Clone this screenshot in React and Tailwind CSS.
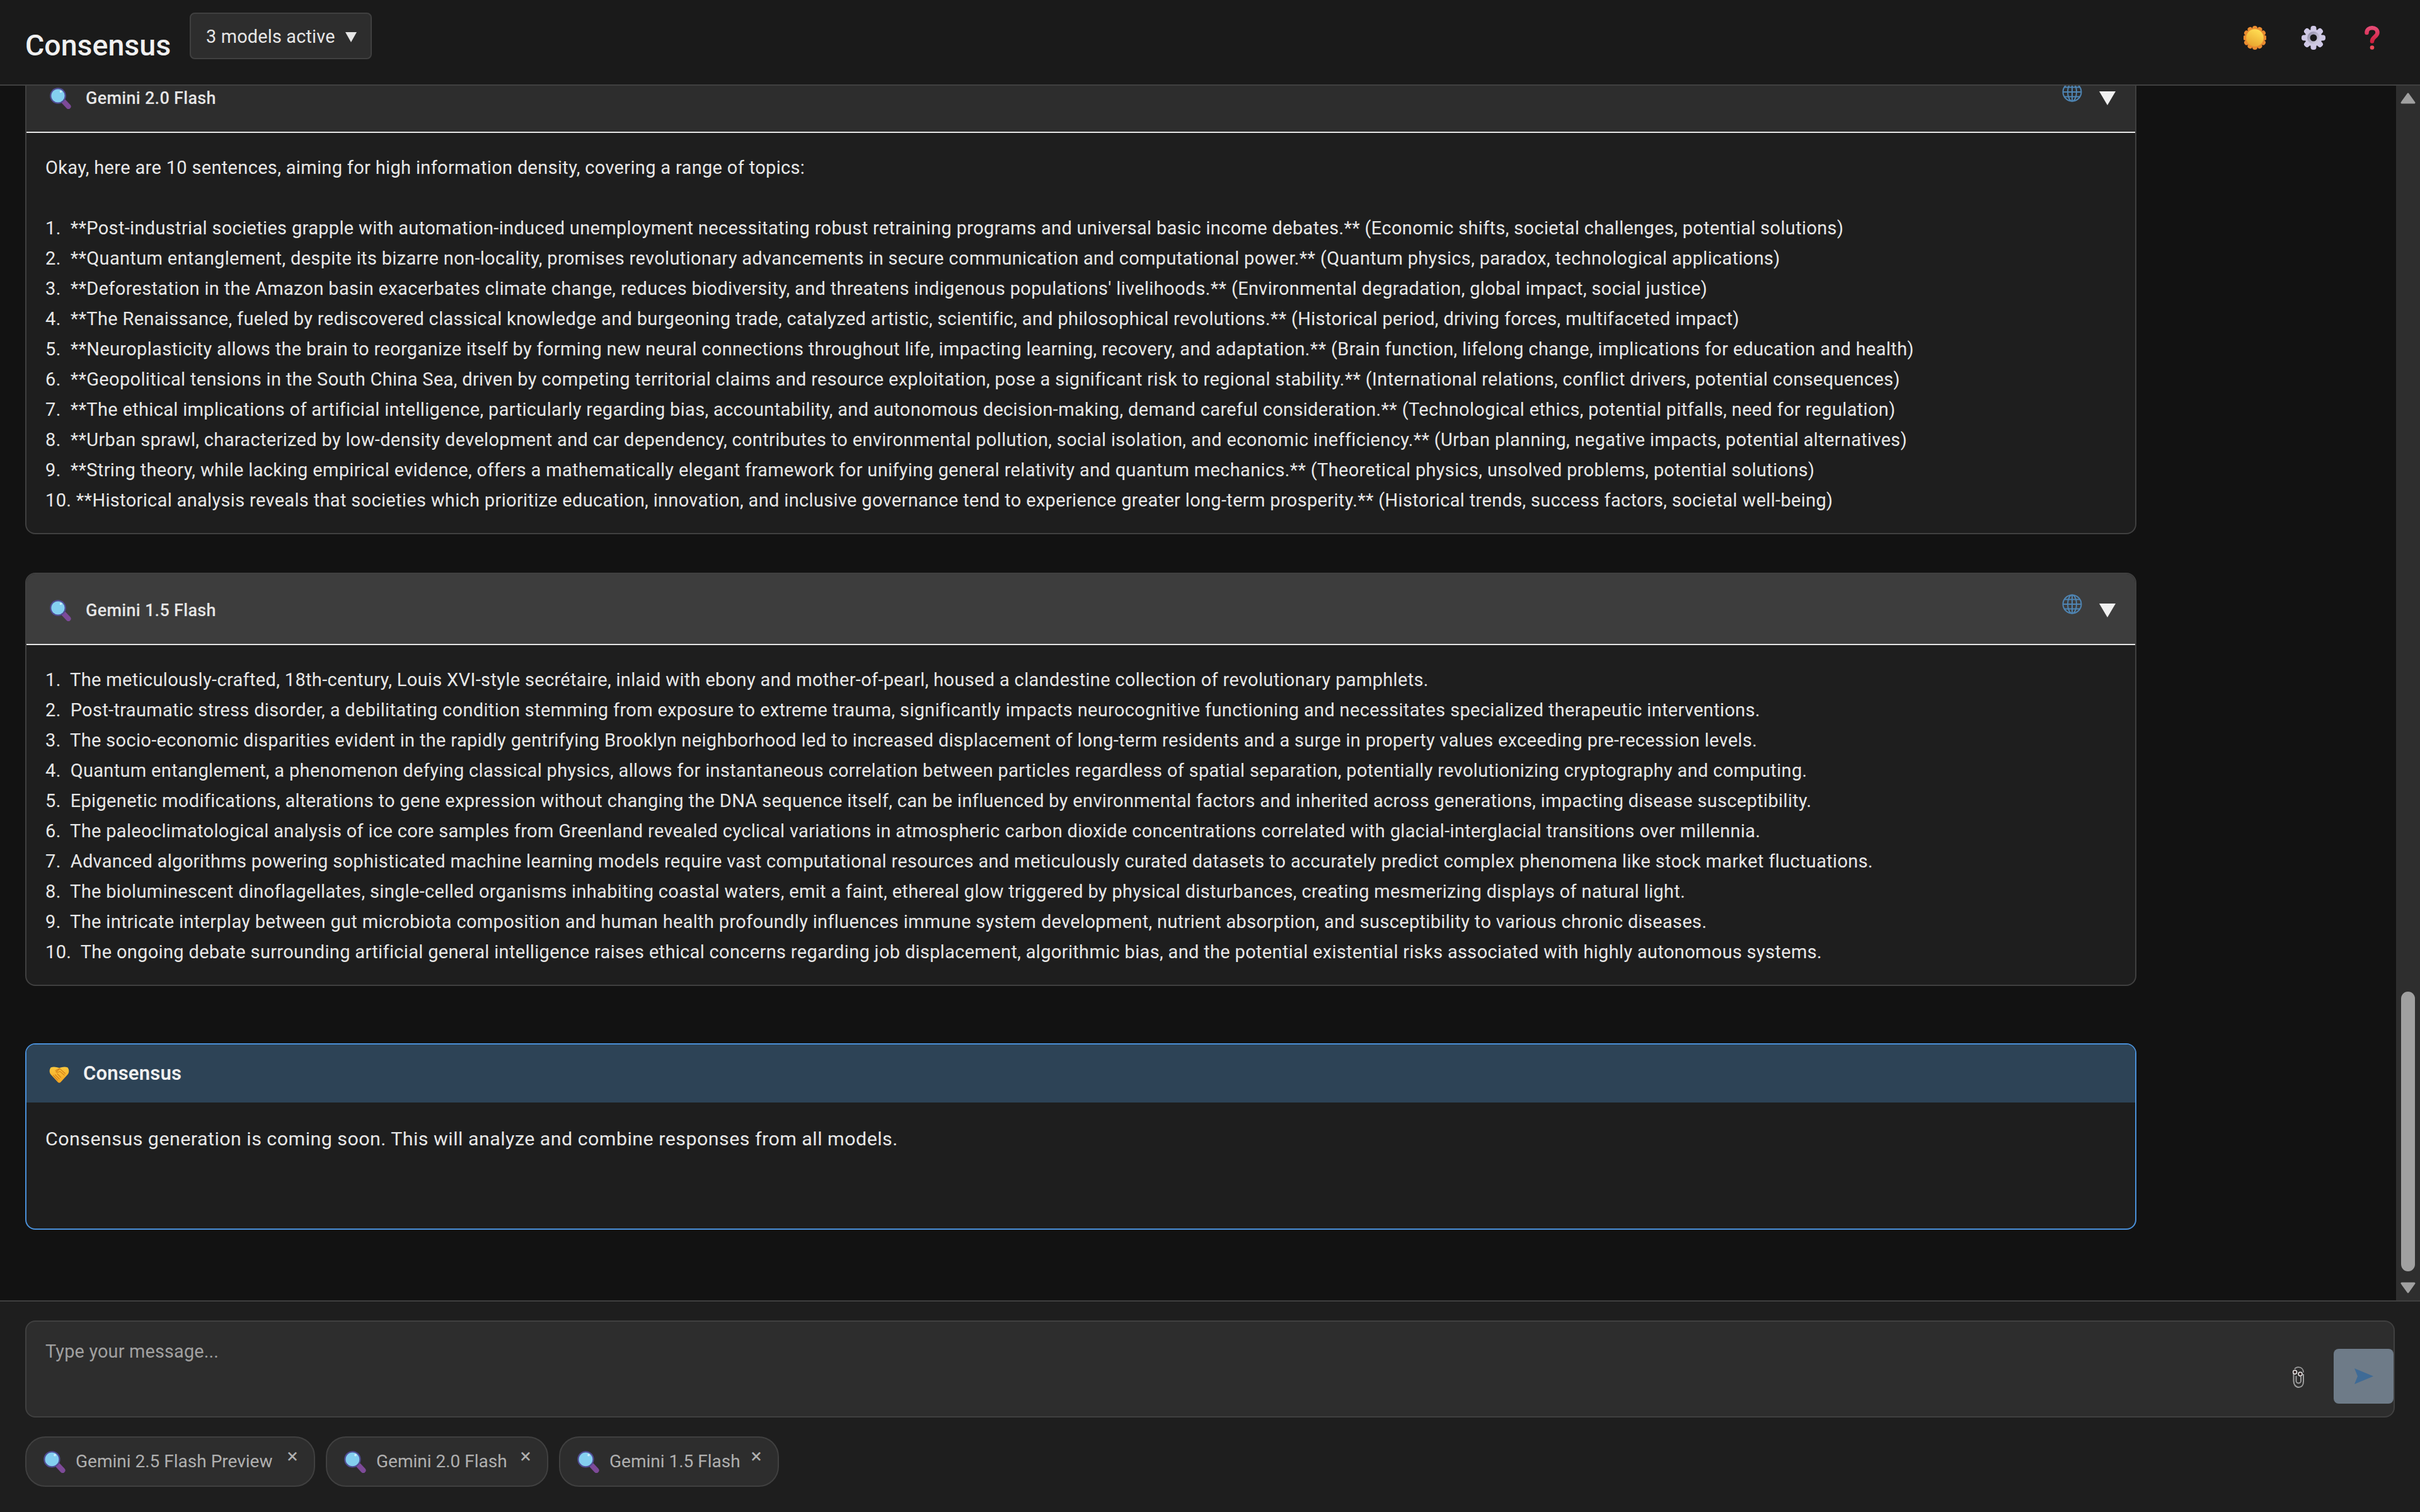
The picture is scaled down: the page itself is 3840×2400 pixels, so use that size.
import React from 'react';

const FIRST_RESPONSE = `Okay, here are 10 sentences, aiming for high information density, covering a range of topics:

1.  **Post-industrial societies grapple with automation-induced unemployment necessitating robust retraining programs and universal basic income debates.** (Economic shifts, societal challenges, potential solutions)
2.  **Quantum entanglement, despite its bizarre non-locality, promises revolutionary advancements in secure communication and computational power.** (Quantum physics, paradox, technological applications)
3.  **Deforestation in the Amazon basin exacerbates climate change, reduces biodiversity, and threatens indigenous populations' livelihoods.** (Environmental degradation, global impact, social justice)
4.  **The Renaissance, fueled by rediscovered classical knowledge and burgeoning trade, catalyzed artistic, scientific, and philosophical revolutions.** (Historical period, driving forces, multifaceted impact)
5.  **Neuroplasticity allows the brain to reorganize itself by forming new neural connections throughout life, impacting learning, recovery, and adaptation.** (Brain function, lifelong change, implications for education and health)
6.  **Geopolitical tensions in the South China Sea, driven by competing territorial claims and resource exploitation, pose a significant risk to regional stability.** (International relations, conflict drivers, potential consequences)
7.  **The ethical implications of artificial intelligence, particularly regarding bias, accountability, and autonomous decision-making, demand careful consideration.** (Technological ethics, potential pitfalls, need for regulation)
8.  **Urban sprawl, characterized by low-density development and car dependency, contributes to environmental pollution, social isolation, and economic inefficiency.** (Urban planning, negative impacts, potential alternatives)
9.  **String theory, while lacking empirical evidence, offers a mathematically elegant framework for unifying general relativity and quantum mechanics.** (Theoretical physics, unsolved problems, potential solutions)
10. **Historical analysis reveals that societies which prioritize education, innovation, and inclusive governance tend to experience greater long-term prosperity.** (Historical trends, success factors, societal well-being)`;

const SECOND_RESPONSE = `1.  The meticulously-crafted, 18th-century, Louis XVI-style secrétaire, inlaid with ebony and mother-of-pearl, housed a clandestine collection of revolutionary pamphlets.
2.  Post-traumatic stress disorder, a debilitating condition stemming from exposure to extreme trauma, significantly impacts neurocognitive functioning and necessitates specialized therapeutic interventions.
3.  The socio-economic disparities evident in the rapidly gentrifying Brooklyn neighborhood led to increased displacement of long-term residents and a surge in property values exceeding pre-recession levels.
4.  Quantum entanglement, a phenomenon defying classical physics, allows for instantaneous correlation between particles regardless of spatial separation, potentially revolutionizing cryptography and computing.
5.  Epigenetic modifications, alterations to gene expression without changing the DNA sequence itself, can be influenced by environmental factors and inherited across generations, impacting disease susceptibility.
6.  The paleoclimatological analysis of ice core samples from Greenland revealed cyclical variations in atmospheric carbon dioxide concentrations correlated with glacial-interglacial transitions over millennia.
7.  Advanced algorithms powering sophisticated machine learning models require vast computational resources and meticulously curated datasets to accurately predict complex phenomena like stock market fluctuations.
8.  The bioluminescent dinoflagellates, single-celled organisms inhabiting coastal waters, emit a faint, ethereal glow triggered by physical disturbances, creating mesmerizing displays of natural light.
9.  The intricate interplay between gut microbiota composition and human health profoundly influences immune system development, nutrient absorption, and susceptibility to various chronic diseases.
10.  The ongoing debate surrounding artificial general intelligence raises ethical concerns regarding job displacement, algorithmic bias, and the potential existential risks associated with highly autonomous systems.`;

const CHIPS = [
  { name: 'Gemini 2.5 Flash Preview', width: 'w-[460px]' },
  { name: 'Gemini 2.0 Flash', width: 'w-[353px]' },
  { name: 'Gemini 1.5 Flash', width: 'w-[349px]' },
];

function Magnifier({ className }) {
  return (
    <svg viewBox="0 0 34 34" className={className}>
      <path d="M22.500 22.500L29.500 30" stroke="#7d4a98" strokeWidth="8" strokeLinecap="round" />
      <circle cx="13" cy="13" r="12.800" fill="#504c94" />
      <circle cx="13" cy="13" r="10.600" fill="#84cff0" />
      <circle cx="17.500" cy="6.500" r="1.800" fill="#cfeffb" />
    </svg>
  );
}

function Globe({ className }) {
  return (
    <svg viewBox="0 0 32 32" className={className} fill="none" stroke="#4f85b3" strokeWidth="2">
      <circle cx="16" cy="16" r="14.500" />
      <ellipse cx="16" cy="16" rx="7" ry="14.500" />
      <path d="M16 1.500v29M1.500 16h29M3.500 8.500h25M3.500 23.500h25" />
    </svg>
  );
}

function Sun({ className }) {
  return (
    <svg viewBox="0 0 36 38" className={className}>
      <defs>
        <linearGradient id="sunFill" x1="0.75" y1="0.1" x2="0.3" y2="1">
          <stop offset="0" stopColor="#ffdc52" />
          <stop offset="1" stopColor="#e8a42e" />
        </linearGradient>
      </defs>
      {[0, 30, 60, 90, 120, 150, 180, 210, 240, 270, 300, 330].map((a) => (
        <circle key={a} cx="18" cy="4" r="4" fill="#ea8c30" transform={`rotate(${a} 18 19)`} />
      ))}
      <circle cx="18" cy="19" r="15" fill="#ea8c30" />
      <circle cx="18" cy="19" r="13.800" fill="url(#sunFill)" />
    </svg>
  );
}

function Gear({ className }) {
  return (
    <svg viewBox="0 0 38 38" className={className}>
      <defs>
        <linearGradient id="gearRing" x1="0" y1="0" x2="1" y2="1">
          <stop offset="0" stopColor="#8f8ba6" />
          <stop offset="1" stopColor="#dcd8ea" />
        </linearGradient>
      </defs>
      {[0, 45, 90, 135, 180, 225, 270, 315].map((a) => (
        <rect key={a} x="14.500" y="0" width="9" height="12" rx="4" fill="#cfc8e6" transform={`rotate(${a} 19 19)`} />
      ))}
      <circle cx="19" cy="19" r="13.500" fill="#cfc9e4" />
      <circle cx="19" cy="19" r="10" fill="url(#gearRing)" />
      <circle cx="19" cy="19" r="5.500" fill="#1a1a1a" />
    </svg>
  );
}

function QuestionMark({ className }) {
  return (
    <svg viewBox="0 0 24 38" className={className}>
      <defs>
        <linearGradient id="questionStroke" x1="0" y1="0" x2="0" y2="1">
          <stop offset="0" stopColor="#e64a74" />
          <stop offset="1" stopColor="#cf2140" />
        </linearGradient>
      </defs>
      <path d="M3.500 11c0-5 4-7.700 8.500-7.700s8.500 2.700 8.500 7.700c0 6-8.500 6.500-8.500 13.500" fill="none" stroke="url(#questionStroke)" strokeWidth="6.500" strokeLinecap="round" />
      <circle cx="12" cy="34.500" r="3.300" fill="#ef4a58" />
    </svg>
  );
}

function Handshake({ className }) {
  return (
    <svg viewBox="0 0 32 26" className={className}>
      <defs>
        <linearGradient id="handFill" x1="0.5" y1="0" x2="0.5" y2="1">
          <stop offset="0" stopColor="#fbc83e" />
          <stop offset="1" stopColor="#f2a423" />
        </linearGradient>
      </defs>
      <path d="M2.500 1.500C7-.5 11 .5 16 2c5-1.500 9-2.500 13.500-.500 2.500 4 2.500 8-.500 11.500L18.500 24.500c-1.500 1.700-3.500 1.700-5 0L3 13C0 9.500 0 5.500 2.500 1.500z" fill="url(#handFill)" />
      <path d="M10 6.500l6.500-3.500 9 8M17 3.500l-6 5c2 1.500 4 .5 6-1l7 6M6.500 14l7 7.500M9.500 13l6.500 6.500M13 11.500l5.500 5.500" stroke="#d4831a" strokeWidth="1.200" fill="none" strokeLinecap="round" />
    </svg>
  );
}

function Clippy({ className }) {
  return (
    <svg viewBox="0 0 19 34" className={className} fill="none">
      <path d="M1.500 12v11c0 6 3.500 10 8 10s7.500-3.500 7.500-9V12" stroke="#9c9c9c" strokeWidth="2" />
      <path d="M5.500 15v8c0 2 1.800 3.500 3.700 3.500S13 25 13 23v-7" stroke="#9c9c9c" strokeWidth="2" />
      <path d="M3 4c2-3.500 9-4 12-.500 1.500 1.500 2 3.500 2 6" stroke="#9c9c9c" strokeWidth="1.600" />
      <circle cx="3.500" cy="9" r="3" fill="#3a2a2a" stroke="#eeeeee" strokeWidth="1.500" />
      <circle cx="12" cy="12" r="3" fill="#3a2a2a" stroke="#eeeeee" strokeWidth="1.500" />
    </svg>
  );
}

function SendArrow({ className }) {
  return (
    <svg viewBox="0 0 30 25" className={className}>
      <path d="M0 0l30 12.500L0 25l5-12.500z" fill="#3f6b96" />
    </svg>
  );
}

function ScrollArrow({ className, points }) {
  return (
    <svg viewBox="0 0 24 18" className={className}>
      <polygon points={points} fill="#a0a0a0" stroke="#a0a0a0" strokeWidth="3" strokeLinejoin="round" />
    </svg>
  );
}

function ResponseCard({ title, text, hovered }) {
  return (
    <div className="border-2 border-[#404040] rounded-2xl bg-[#1e1e1e] overflow-hidden">
      <div className={`h-[113px] flex items-center pl-[37px] pr-[31px] border-b-2 border-[#e6e6e6] ${hovered ? 'bg-[#3d3d3d]' : 'bg-[#2d2d2d]'}`}>
        <Magnifier className="w-[34px] h-[34px] mt-[5px]" />
        <span className="ml-[23px] text-[27px] tracking-[0.3px] font-medium text-[#e6e6e6] mt-[5px]">{title}</span>
        <div className="ml-auto flex items-start">
          <Globe className="w-[32px] h-[32px] mb-[16px]" />
          <span className="ml-[27px] mt-[15px] w-0 h-0 border-x-[13px] border-x-transparent border-t-[22px] border-t-[#f0f0f0]" />
        </div>
      </div>
      <div className="px-[30px] pt-[31px] pb-[28px] text-[29px] tracking-[0.33px] leading-[48px] text-[#e8e8e8] whitespace-pre-wrap">{text}</div>
    </div>
  );
}

function ConsensusCard() {
  return (
    <div className="border-2 border-[#4a90d9] rounded-2xl bg-[#1e1e1e] overflow-hidden h-[296px]">
      <div className="h-[92px] flex items-center pl-[36px] bg-[#2d4356]">
        <Handshake className="w-[32px] h-[26px] mt-[3px]" />
        <span className="ml-[22px] text-[31px] tracking-[0.2px] font-semibold text-[#f0f0f0]">Consensus</span>
      </div>
      <p className="px-[30px] pt-[32px] text-[30.4px] tracking-[0.47px] leading-[52px] text-[#e8e8e8]">
        Consensus generation is coming soon. This will analyze and combine responses from all models.
      </p>
    </div>
  );
}

function ScrollBar() {
  return (
    <div className="w-[38px] shrink-0 bg-[#2e2e2e] flex flex-col items-center">
      <ScrollArrow className="mt-[11px] w-[24px] h-[18px]" points="12,2 22,16 2,16" />
      <div className="mt-[1409px] w-[22px] h-[444px] rounded-full bg-[#a0a0a0]" />
      <ScrollArrow className="mt-[17px] w-[24px] h-[18px]" points="2,2 22,2 12,16" />
    </div>
  );
}

export default function App() {
  return (
    <div className="w-[3840px] h-[2400px] flex flex-col overflow-hidden bg-[#121212] font-['Roboto',sans-serif]">
      {/* Header */}
      <header className="h-[136px] shrink-0 flex items-start bg-[#1a1a1a] border-b-2 border-[#404040] pl-[40px]">
        <h1 className="mt-[40px] w-[229px] text-[46.5px] leading-[64px] font-medium text-[#f0f0f0]">Consensus</h1>
        <button className="ml-[32px] mt-[20px] w-[289px] h-[74px] flex items-center pl-[24px] pt-[4px] bg-[#2d2d2d] border-2 border-[#404040] rounded-lg text-[28.8px] tracking-[0.2px] text-[#e6e6e6]">
          3 models active
          <span className="ml-[16px] w-0 h-0 border-x-[9px] border-x-transparent border-t-[16px] border-t-[#e6e6e6]" />
        </button>
        <div className="ml-auto mt-[41px] flex items-start">
          <Sun className="w-[36px] h-[38px]" />
          <Gear className="ml-[56px] w-[38px] h-[38px]" />
          <QuestionMark className="ml-[62px] mr-[64px] w-[24px] h-[38px]" />
        </div>
      </header>

      {/* Messages */}
      <main className="flex-1 min-h-0 flex overflow-hidden">
        <div className="flex-1 min-w-0 pl-[40px]">
          <div className="w-[3350px] -mt-[40px] flex flex-col">
            <ResponseCard title="Gemini 2.0 Flash" text={FIRST_RESPONSE} />
            <div className="mt-[61px]">
              <ResponseCard title="Gemini 1.5 Flash" text={SECOND_RESPONSE} hovered />
            </div>
            <div className="mt-[91px]">
              <ConsensusCard />
            </div>
          </div>
        </div>
        <ScrollBar />
      </main>

      {/* Input */}
      <footer className="h-[336px] shrink-0 bg-[#1e1e1e] border-t-2 border-[#404040] pt-[30px] px-[40px]">
        <div className="flex items-start w-[3760px] h-[154px] bg-[#2d2d2d] border-2 border-[#404040] rounded-2xl pl-[30px]">
          <span className="mt-[27px] text-[28.8px] tracking-[0.2px] leading-[40px] text-[#a0a0a0]">Type your message...</span>
          <Clippy className="ml-auto mt-[71px] w-[19px] h-[34px]" />
          <div className="ml-[46px] mt-[43px] w-[95px] h-[87px] rounded-lg bg-[#6e7b88] flex items-center justify-center">
            <SendArrow className="w-[30px] h-[25px]" />
          </div>
        </div>
        <div className="mt-[30px] flex gap-[17px]">
          {CHIPS.map((chip) => (
            <div key={chip.name} className={`${chip.width} h-[80px] flex items-center pl-[27px] pr-[26px] bg-[#2d2d2d] border-2 border-[#404040] rounded-[32px]`}>
              <Magnifier className="w-[35px] h-[35px]" />
              <span className="ml-[16px] text-[28px] text-[#b0b0b0]">{chip.name}</span>
              <span className="ml-auto mb-[18px] w-[16px] flex justify-center text-[32px] leading-none text-[#b0b0b0]">×</span>
            </div>
          ))}
        </div>
      </footer>
    </div>
  );
}
